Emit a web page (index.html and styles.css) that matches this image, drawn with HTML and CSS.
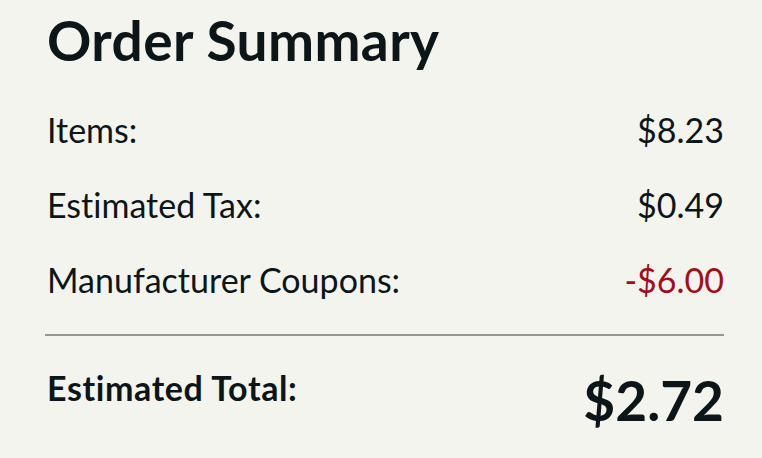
FILE: index.html
```html
<!DOCTYPE html>
<html lang="en">
<head>
<meta charset="utf-8">
<title>Order Summary</title>
<link rel="stylesheet" href="styles.css">
</head>
<body>
<section class="summary">
  <h1 class="summary-title">Order Summary</h1>
  <div class="rows">
    <div class="row"><span class="label">Items:</span><span class="value">$8.23</span></div>
    <div class="row"><span class="label">Estimated Tax:</span><span class="value">$0.49</span></div>
    <div class="row"><span class="label">Manufacturer Coupons:</span><span class="value value-discount">-$6.00</span></div>
  </div>
  <hr class="divider">
  <div class="total">
    <span class="total-label">Estimated Total:</span>
    <span class="total-value">$2.72</span>
  </div>
</section>
</body>
</html>
```
FILE: styles.css
```css
html, body {
  margin: 0;
  padding: 0;
  background: #f4f4ef;
}
body {
  font-family: Lato, "Open Sans", sans-serif;
  font-variant-ligatures: none;
  font-feature-settings: "liga" 0, "dlig" 0;
  color: #0c1618;
}
.summary {
  padding: 13px 38px 0 47px;
}
.summary-title {
  margin: 0 0 24px 0;
  font-size: 55px;
  line-height: 55px;
  font-weight: 700;
  letter-spacing: 0.4px;
}
.rows {
  display: flex;
  flex-direction: column;
}
.row {
  display: flex;
  justify-content: space-between;
  font-size: 34px;
  line-height: 75px;
}
.value-discount {
  color: #a50d1d;
}
.divider {
  margin: 17px 0 0 -2px;
  border: 0;
  height: 2px;
  background: #9a9593;
}
.total {
  display: flex;
  justify-content: space-between;
  align-items: flex-start;
  margin-top: 35px;
}
.total-label {
  font-size: 34px;
  line-height: 34px;
  font-weight: 700;
  letter-spacing: 0.6px;
}
.total-value {
  font-size: 55px;
  line-height: 55px;
  font-weight: 700;
  padding-top: 2px;
}
```
